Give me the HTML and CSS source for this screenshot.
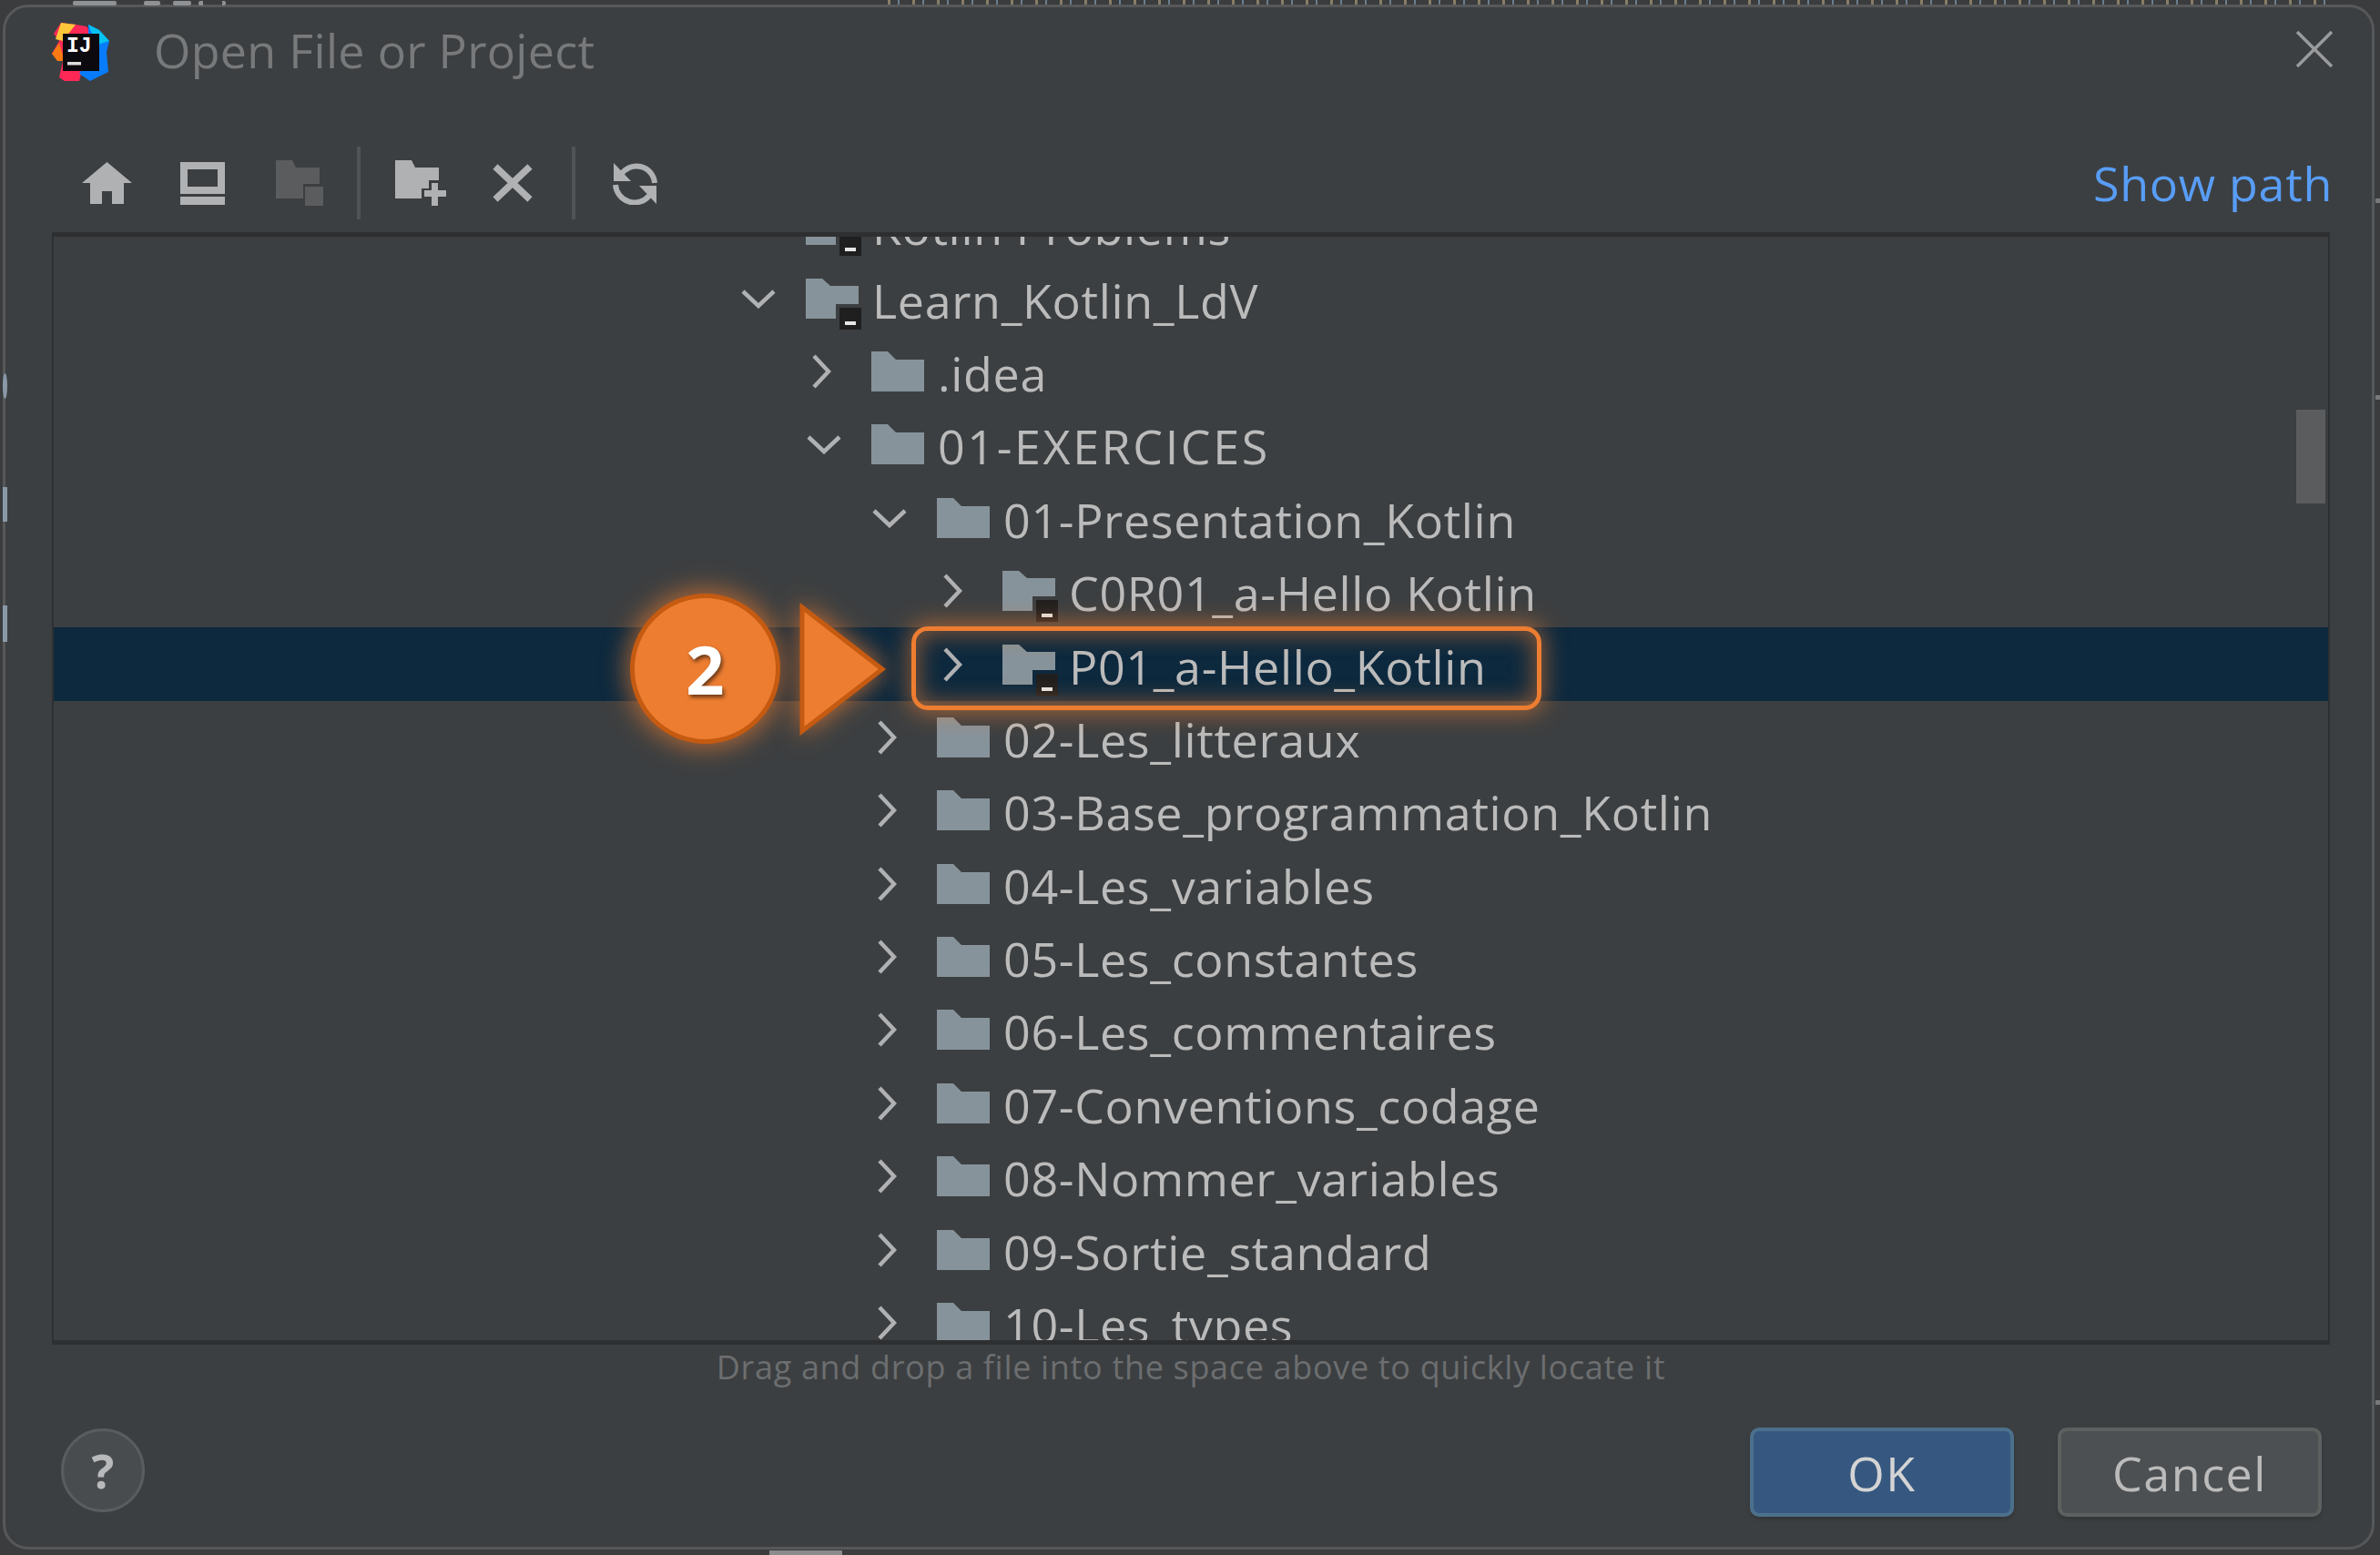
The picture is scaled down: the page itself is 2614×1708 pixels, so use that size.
FILE: index.html
```
<!DOCTYPE html>
<html lang="en">
<head>
<meta charset="utf-8">
<title>Open File or Project</title>
<link rel="stylesheet" href="styles.css">
</head>
<body>
<svg class="defs" width="0" height="0" aria-hidden="true">
  <defs>
    <symbol id="folder" viewBox="0 0 58 44"><path d="M0 0H18L27 9H58V44H0Z"/></symbol>
    <symbol id="folder-mod" viewBox="0 0 58 44"><path d="M0 0H18L27 8H58V28H33V44H0Z"/></symbol>
    <symbol id="chev-r" viewBox="0 0 22 38"><path d="M3 2L19 19L3 36" fill="none" stroke-width="4.5"/></symbol>
    <symbol id="chev-d" viewBox="0 0 38 22"><path d="M2 3L19 19L36 3" fill="none" stroke-width="4.5"/></symbol>
    <symbol id="badge" viewBox="0 0 24 24"><rect width="24" height="24" fill="#201f1f"/><rect x="6" y="15" width="12" height="4" fill="#e6e6e6"/></symbol>
  </defs>
</svg>
<div class="frag-text"></div>
<span class="frag f1"></span><span class="frag f2"></span><span class="frag f3"></span><span class="frag f4"></span>
<span class="edge e1"></span><span class="edge e2"></span><span class="edge e3"></span>
<span class="edge r1"></span><span class="edge r2"></span><span class="edge r3"></span>
<span class="tick"></span>
<main class="dialog">
  <header class="titlebar">
    <svg class="logo" viewBox="0 0 64 66">
      <path d="M10 2L26 4L38 6L44 14L30 66H14L8 62L12 44L0 36L8 22L2 14Z" fill="#fe2857"/>
      <path d="M10 2L26 4L12 22L4 20Z" fill="#ffc63a"/>
      <path d="M0 36L8 24L14 44L6 44Z" fill="#f97a12"/>
      <path d="M40 4L52 10L63 22L60 34L62 56L42 66L30 58L40 40Z" fill="#087cfa"/>
      <path d="M40 4L52 10L63 22L50 26L44 14Z" fill="#07c3f2"/>
      <rect x="12" y="14" width="40" height="41" fill="#0c0a0e"/>
      <text class="logo-ij" x="16" y="34">IJ</text>
      <rect x="17" y="45" width="15" height="3.5" fill="#ddd"/>
    </svg>
    <h1 class="title">Open File or Project</h1>
    <svg class="close" viewBox="0 0 40 40"><path d="M1 1L39 39M39 1L1 39"/></svg>
  </header>
  <div class="toolbar">
    <svg class="tool t-home" viewBox="0 0 55 46"><path d="M27.5 0L55 23H46V46H33V32H22V46H9V23H0Z"/></svg>
    <svg class="tool t-pc" viewBox="0 0 49 47"><path fill-rule="evenodd" d="M0 0H49V35H0ZM8 8V27H41V8Z"/><rect y="38" width="49" height="9"/></svg>
    <svg class="tool t-off" viewBox="0 0 52 50"><path d="M0 0H18L22 8H48V26H30V42H0Z"/><rect x="32" y="29" width="20" height="21"/></svg>
    <span class="sep"></span>
    <svg class="tool t-new" viewBox="0 0 57 50"><path d="M0 0H18L22 8H48V22H37V31H29V42H0Z"/><path d="M40 25H47V33H56V40H47V50H40V40H32V33H40Z"/></svg>
    <svg class="tool t-x" viewBox="0 0 44 42"><path d="M3 3L41 39M41 3L3 39" fill="none" stroke-width="7.5"/></svg>
    <span class="sep"></span>
    <svg class="tool t-ref" viewBox="0 0 49 48"><path d="M9 15A20 20 0 0 1 46 24" fill="none" stroke-width="6"/><path d="M1 2V22H20Z"/><path d="M3 26A21 21 0 0 0 40 38" fill="none" stroke-width="6"/><path d="M29 27H48V47Z"/></svg>
    <span class="spacer"></span>
    <a class="show-path">Show path</a>
  </div>
  <section class="panel">
    <ul class="tree">
      <li class="row d0"><svg class="chev"><use href="#chev-d"/></svg><span class="folder"><svg><use href="#folder-mod"/></svg><svg class="badge"><use href="#badge"/></svg></span><span class="name">Kotlin Problems</span></li>
      <li class="row d0"><svg class="chev"><use href="#chev-d"/></svg><span class="folder"><svg><use href="#folder-mod"/></svg><svg class="badge"><use href="#badge"/></svg></span><span class="name">Learn_Kotlin_LdV</span></li>
      <li class="row d1"><svg class="chev right"><use href="#chev-r"/></svg><span class="folder"><svg><use href="#folder"/></svg></span><span class="name">.idea</span></li>
      <li class="row d1"><svg class="chev"><use href="#chev-d"/></svg><span class="folder"><svg><use href="#folder"/></svg></span><span class="name caps">01-EXERCICES</span></li>
      <li class="row d2"><svg class="chev"><use href="#chev-d"/></svg><span class="folder"><svg><use href="#folder"/></svg></span><span class="name">01-Presentation_Kotlin</span></li>
      <li class="row d3"><svg class="chev right"><use href="#chev-r"/></svg><span class="folder"><svg><use href="#folder-mod"/></svg><svg class="badge"><use href="#badge"/></svg></span><span class="name">C0R01_a-Hello Kotlin</span></li>
      <li class="row d3 selected"><svg class="chev right"><use href="#chev-r"/></svg><span class="folder"><svg><use href="#folder-mod"/></svg><svg class="badge"><use href="#badge"/></svg></span><span class="name">P01_a-Hello_Kotlin</span></li>
      <li class="row d2"><svg class="chev right"><use href="#chev-r"/></svg><span class="folder"><svg><use href="#folder"/></svg></span><span class="name">02-Les_litteraux</span></li>
      <li class="row d2"><svg class="chev right"><use href="#chev-r"/></svg><span class="folder"><svg><use href="#folder"/></svg></span><span class="name">03-Base_programmation_Kotlin</span></li>
      <li class="row d2"><svg class="chev right"><use href="#chev-r"/></svg><span class="folder"><svg><use href="#folder"/></svg></span><span class="name">04-Les_variables</span></li>
      <li class="row d2"><svg class="chev right"><use href="#chev-r"/></svg><span class="folder"><svg><use href="#folder"/></svg></span><span class="name">05-Les_constantes</span></li>
      <li class="row d2"><svg class="chev right"><use href="#chev-r"/></svg><span class="folder"><svg><use href="#folder"/></svg></span><span class="name">06-Les_commentaires</span></li>
      <li class="row d2"><svg class="chev right"><use href="#chev-r"/></svg><span class="folder"><svg><use href="#folder"/></svg></span><span class="name">07-Conventions_codage</span></li>
      <li class="row d2"><svg class="chev right"><use href="#chev-r"/></svg><span class="folder"><svg><use href="#folder"/></svg></span><span class="name">08-Nommer_variables</span></li>
      <li class="row d2"><svg class="chev right"><use href="#chev-r"/></svg><span class="folder"><svg><use href="#folder"/></svg></span><span class="name">09-Sortie_standard</span></li>
      <li class="row d2"><svg class="chev right"><use href="#chev-r"/></svg><span class="folder"><svg><use href="#folder"/></svg></span><span class="name">10-Les_types</span></li>
    </ul>
    <div class="scrollbar"></div>
  </section>
  <p class="hint">Drag and drop a file into the space above to quickly locate it</p>
  <footer class="footer">
    <button class="help">?</button>
    <span class="spacer"></span>
    <button class="btn primary">OK</button>
    <button class="btn">Cancel</button>
  </footer>
  <div class="ring"></div>
  <div class="step">2</div>
  <svg class="arrow" viewBox="0 0 96 146"><path d="M3 5L91 73L3 141Z"/></svg>
</main>
</body>
</html>
```
FILE: styles.css
```
* { box-sizing: border-box; }
html, body { margin: 0; height: 100%; }
body {
  position: relative;
  background: #3a3c3e;
  padding: 5px 6px 6px 3px;
  font-family: "Open Sans", "Noto Sans", sans-serif;
  overflow: hidden;
}
.defs { position: absolute; }
.frag-text {
  position: absolute; left: 975px; top: 0; width: 1590px; height: 5px; opacity: .7;
  background: repeating-linear-gradient(90deg, #a89878 0 3px, transparent 3px 11px, #7f9ab0 11px 13px, transparent 13px 27px);
}
.frag { position: absolute; top: 1px; height: 5px; background: #8f9294; z-index: 1; border-radius: 2px; }
.f1 { left: 80px; width: 48px; }
.f2 { left: 158px; width: 18px; }
.f3 { left: 190px; width: 20px; }
.f4 { left: 218px; width: 30px; background: repeating-linear-gradient(90deg, #8f9294 0 5px, transparent 5px 26px); }
.edge { position: absolute; width: 5px; background: #8a99a8; z-index: 1; }
.e1 { left: 3px; top: 410px; height: 28px; border-radius: 50%; }
.e2 { left: 3px; top: 535px; height: 38px; }
.e3 { left: 3px; top: 665px; height: 40px; }
.r1, .r2, .r3 { left: 2609px; height: 5px; background: #77797b; }
.r1 { top: 218px; }
.r2 { top: 434px; }
.r3 { top: 1538px; }
.tick { position: absolute; left: 845px; top: 1703px; width: 80px; height: 5px; background: #8a8b8c; }
.dialog {
  position: relative;
  height: 1697px;
  background: #3c3f41;
  border: 3px solid #56585a;
  border-radius: 28px;
  display: flex;
  flex-direction: column;
  padding: 0 46px 0 51px;
}
.titlebar { height: 92px; display: flex; align-items: center; gap: 48px; flex: none; }
.logo { width: 64px; height: 66px; flex: none; margin-top: 4px; }
.logo-ij { font: 700 23px "Liberation Mono", monospace; fill: #fff; }
.title { margin: 2px 0 0; font-size: 52px; font-weight: 400; letter-spacing: .3px; color: #78797a; line-height: 1; flex: 1; }
.close { width: 40px; height: 40px; margin-right: -3px; flex: none; }
.close path { stroke: #9a9b9c; stroke-width: 3.5; fill: none; }
.toolbar { height: 155px; padding-top: 47px; display: flex; align-items: center; flex: none; }
.tool { fill: #afb1b3; stroke: #afb1b3; stroke-width: 0; flex: none; }
.t-home { width: 55px; height: 46px; margin-left: 33px; }
.t-pc { width: 49px; height: 47px; margin-left: 53px; }
.t-off { width: 52px; height: 50px; margin-left: 56px; fill: #5a5c5d; }
.sep { width: 4px; height: 80px; background: #515355; margin-left: 37px; flex: none; }
.t-new { width: 57px; height: 50px; margin-left: 38px; }
.t-x { width: 44px; height: 42px; margin-left: 50px; }
.t-ref { width: 49px; height: 48px; margin-left: 41px; }
.t-x + .sep { margin-left: 43px; }
.spacer { flex: 1; }
.show-path { font-size: 52px; letter-spacing: .7px; color: #589df6; line-height: 1; margin-right: -3px; }
.panel {
  position: relative;
  height: 1222px;
  flex: none;
  border: solid #2e2f30;
  border-width: 5px 2px 5px 2px;
  overflow: hidden;
}
.tree { list-style: none; margin: -53px 0 0; padding: 0; }
.row { height: 80.4px; display: flex; align-items: center; color: #bbbbbb; font-size: 52px; letter-spacing: .65px; }
.row.selected { background: #0d293e; }
.d0 { padding-left: 755px; }
.d1 { padding-left: 827px; }
.d2 { padding-left: 899px; }
.d3 { padding-left: 971px; }
.chev { width: 38px; height: 22px; stroke: #afb1b3; flex: none; margin-right: 33px; }
.chev.right { width: 22px; height: 38px; margin-left: 5px; margin-right: 44px; }
.folder { position: relative; width: 58px; height: 44px; fill: #87939a; flex: none; margin-right: 15px; }
.folder > svg { display: block; width: 58px; height: 44px; }
.folder > svg.badge { position: absolute; right: -3px; bottom: -12px; width: 24px; height: 24px; }
.name { white-space: nowrap; line-height: 1; padding-top: 4px; }
.name.caps { letter-spacing: 2.6px; }
.scrollbar { position: absolute; top: 190px; right: 3px; width: 32px; height: 103px; background: #5a5c5e; }
.hint { margin: -4px 0 0; height: 56px; display: flex; align-items: center; justify-content: center; font-size: 36px; letter-spacing: .67px; color: #6c6e70; flex: none; }
.footer { flex: 1; display: flex; align-items: flex-start; padding-top: 39px; }
.help {
  width: 92px; height: 92px; margin-left: 10px; margin-top: 1px; border-radius: 50%;
  background: #494c4f; border: 3px solid #5a5d5f; color: #b8b9ba;
  font: 700 52px "Open Sans", sans-serif; padding: 0; line-height: 1;
}
.btn {
  width: 290px; height: 98px; margin-left: 48px; border-radius: 10px;
  background: #4c5052; border: 4px solid #5e6060; color: #bbbbbb;
  font: 400 52px "Open Sans", sans-serif; letter-spacing: 1.5px; padding: 0;
  box-shadow: 0 3px 4px rgba(0,0,0,.15);
}
.btn.primary { background: #365880; border-color: #4c708c; color: #d4d4d4; }
.btn:last-child { margin-right: 9px; }
.ring {
  position: absolute; left: 995px; top: 680px; width: 692px; height: 92px;
  border: 5px solid #ed7d31; border-radius: 18px;
  box-shadow: 0 0 24px 4px rgba(237,125,49,.55), inset 0 0 24px 4px rgba(237,125,49,.5);
}
.step {
  position: absolute; left: 686px; top: 644px; width: 165px; height: 165px;
  border-radius: 50%; background: #ed7d31; border: 5px solid #c55a11;
  box-shadow: 0 0 26px 6px rgba(237,125,49,.6);
  color: #fff; font: 700 74px "Open Sans", sans-serif;
  display: flex; align-items: center; justify-content: center;
  text-shadow: 2px 3px 4px rgba(0,0,0,.55);
}
.arrow {
  position: absolute; left: 872px; top: 654px; width: 96px; height: 146px;
  fill: #ed7d31; stroke: #c55a11; stroke-width: 5;
  filter: drop-shadow(0 0 14px rgba(237,125,49,.8));
}
```
